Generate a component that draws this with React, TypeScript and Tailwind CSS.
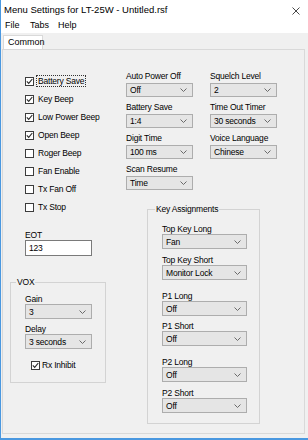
import React from "react";

type ComboProps = { value: string; size: string };

const Chevron = () => (
  <svg width="7" height="4" viewBox="0 0 7 4" className="block shrink-0">
    <polyline points="0.5,0.5 3.5,3.5 6.5,0.5" fill="none" stroke="#6a6a6a" strokeWidth="1" />
  </svg>
);

const Combo = ({ value, size }: ComboProps) => (
  <div className={`flex items-center justify-between bg-[#e5e5e5] border border-[#adadad] pl-[3px] pr-[5px] ${size}`}>
    <span className="leading-[10px] whitespace-nowrap">{value}</span>
    <Chevron />
  </div>
);

const Tick = () => (
  <svg width="7" height="7" viewBox="0 0 7 7" className="block">
    <polyline points="0.8,3.4 2.7,5.4 6.3,1" fill="none" stroke="#2a2a2a" strokeWidth="1.1" />
  </svg>
);

const CheckBox = ({ label, checked, focus }: { label: string; checked?: boolean; focus?: boolean }) => (
  <div className="flex items-center h-[18px] whitespace-nowrap">
    <span className="w-[9px] h-[9px] border border-[#3c3c3c] bg-white flex items-center justify-center shrink-0">
      {checked && <Tick />}
    </span>
    <span
      className={`ml-[2px] px-[1px] leading-[10px] border ${
        focus ? "border-dotted border-[#333]" : "border-transparent"
      }`}
    >
      {label}
    </span>
  </div>
);

const Field = ({ label, value, size, className = "" }: { label: string; value: string; size: string; className?: string }) => (
  <div className={className}>
    <div className="h-[10px] leading-[10px] whitespace-nowrap">{label}</div>
    <Combo value={value} size={size} />
  </div>
);

const checks = [
  { label: "Battery Save", checked: true, focus: true },
  { label: "Key Beep", checked: true },
  { label: "Low Power Beep", checked: true },
  { label: "Open Beep", checked: true },
  { label: "Roger Beep" },
  { label: "Fan Enable" },
  { label: "Tx Fan Off" },
  { label: "Tx Stop" },
];

const colA = [
  ["Auto Power Off", "Off"],
  ["Battery Save", "1:4"],
  ["Digit Time", "100 ms"],
  ["Scan Resume", "Time"],
];

const colB = [
  ["Squelch Level", "2"],
  ["Time Out Timer", "30 seconds"],
  ["Voice Language", "Chinese"],
];

const keys = [
  { label: "Top Key Long", value: "Fan", gap: "" },
  { label: "Top Key Short", value: "Monitor Lock", gap: "mt-[6px]" },
  { label: "P1 Long", value: "Off", gap: "mt-[11px]" },
  { label: "P1 Short", value: "Off", gap: "mt-[5px]" },
  { label: "P2 Long", value: "Off", gap: "mt-[11px]" },
  { label: "P2 Short", value: "Off", gap: "mt-[6px]" },
];

export default function App() {
  return (
    <div className="w-[308px] h-[440px] bg-[#f0f0f0] border-l border-b-2 border-[#4a98e0] flex flex-col text-[8.5px] tracking-[-0.2px] text-black font-['Liberation_Sans',Arial,sans-serif] overflow-hidden">
      {/* title bar */}
      <div className="h-[19px] bg-white flex items-center justify-between pl-[3px] pr-[8px] tracking-normal">
        <span className="text-[9.5px] leading-[10px]">Menu Settings for LT-25W - Untitled.rsf</span>
        <svg width="8" height="8" viewBox="0 0 8 8" className="block mt-[2px]">
          <path d="M0.5 0.5 L7.5 7.5 M7.5 0.5 L0.5 7.5" stroke="#333" strokeWidth="0.9" />
        </svg>
      </div>

      {/* menu bar */}
      <div className="h-[14px] bg-white flex items-center pl-[4px] text-[9px] tracking-normal">
        <span className="w-[25px]">File</span>
        <span className="w-[28px]">Tabs</span>
        <span>Help</span>
      </div>

      {/* tab strip */}
      <div className="pt-[2px] pl-[2px]">
        <div className="w-[40px] h-[14px] bg-white border border-b-0 border-[#d9d9d9] flex items-center pl-[4px] text-[9px] tracking-normal">
          Common
        </div>
      </div>

      {/* tab page */}
      <div className="ml-[1px] mr-[3px] h-[385px] border border-[#d9d9d9] pt-[21px] pl-[7px] flex gap-[20px]">
        {/* left column */}
        <div className="w-[96px] shrink-0 flex flex-col">
          <div className="pl-[15px] mt-[1px]">
            {checks.map((c) => (
              <CheckBox key={c.label} label={c.label} checked={c.checked} focus={c.focus} />
            ))}
          </div>

          <div className="pl-[15px] mt-[14px]">
            <div className="h-[10px] leading-[10px]">EOT</div>
            <div className="w-[67px] h-[16px] bg-white border border-[#7a7a7a] flex items-center pl-[3px]">123</div>
          </div>

          <div className="relative mt-[26px] border border-[#d3d3d3] pt-[11px] pl-[14px] pb-[12px]">
            <span className="absolute -top-[6px] left-[5px] px-[1px] bg-[#f0f0f0] leading-[10px]">VOX</span>
            <Field label="Gain" value="3" size="w-[67px] h-[15px]" />
            <Field label="Delay" value="3 seconds" size="w-[67px] h-[15px]" className="mt-[5px]" />
            <div className="mt-[11px] pl-[6px] flex items-center h-[10px]">
              <span className="w-[9px] h-[9px] border border-[#3c3c3c] bg-white flex items-center justify-center">
                <Tick />
              </span>
              <span className="ml-[2px] leading-[10px] whitespace-nowrap">Rx Inhibit</span>
            </div>
          </div>
        </div>

        {/* right column */}
        <div className="flex flex-col">
          <div className="flex gap-[17px]">
            <div className="flex flex-col gap-[5px]">
              {colA.map(([l, v]) => (
                <div key={l}>
                  <div className="h-[10px] leading-[10px] whitespace-nowrap">{l}</div>
                  <div className="mt-[2px]">
                    <Combo value={v} size="w-[67px] h-[14px]" />
                  </div>
                </div>
              ))}
            </div>
            <div className="flex flex-col gap-[5px]">
              {colB.map(([l, v]) => (
                <div key={l}>
                  <div className="h-[10px] leading-[10px] whitespace-nowrap">{l}</div>
                  <div className="mt-[2px]">
                    <Combo value={v} size="w-[67px] h-[14px]" />
                  </div>
                </div>
              ))}
            </div>
          </div>

          <div className="relative mt-[19px] ml-[21px] w-[113px] border border-[#d3d3d3] pt-[14px] pl-[14px] pb-[10px]">
            <span className="absolute -top-[6px] left-[7px] px-[1px] bg-[#f0f0f0] leading-[10px] whitespace-nowrap">
              Key Assignments
            </span>
            {keys.map((k) => (
              <Field key={k.label} label={k.label} value={k.value} size="w-[85px] h-[15px]" className={k.gap} />
            ))}
          </div>
        </div>
      </div>
    </div>
  );
}
